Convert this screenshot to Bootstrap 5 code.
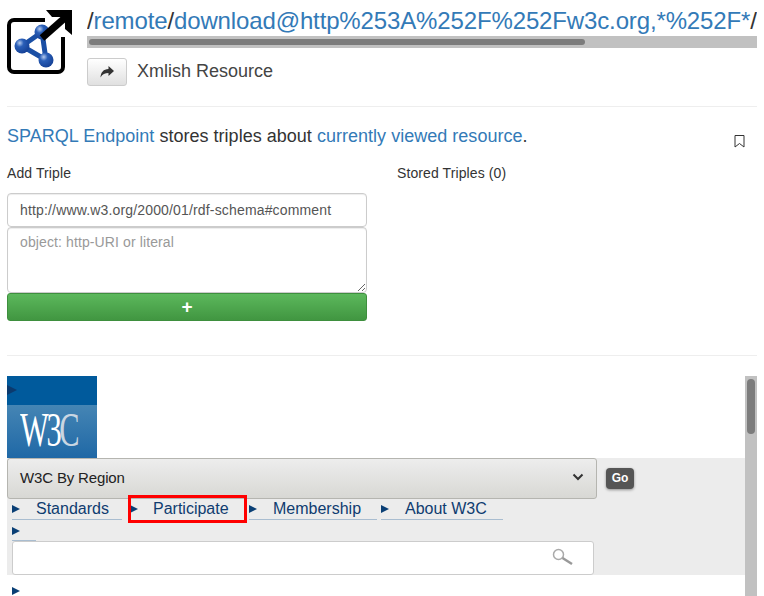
<!DOCTYPE html>
<html lang="en">
<head>
<meta charset="utf-8">
<title>Xmlish Resource</title>
<link rel="stylesheet" href="https://cdn.jsdelivr.net/npm/bootstrap@5.3.0/dist/css/bootstrap.min.css">
<style>
html,body{height:596px;overflow:hidden;background:#fff}
body{font-family:"Liberation Sans",Arial,sans-serif;font-size:14px;line-height:20px;color:#333;padding:0 7px;width:764px}
a{color:#337ab7;text-decoration:none}
.hdr{height:107px;border-bottom:1px solid #eee;gap:15px;padding-top:7px}
.logo-box{width:65px;height:70px;flex:none}
.hdr-main{min-width:0;flex:1}
.path-line{font-size:24px;line-height:27px;white-space:nowrap;overflow:hidden;height:29px;letter-spacing:-.135px}
.hscroll{height:12px;background:#c1c1c1;padding:3px 2px;margin-bottom:10px}
.hscroll-thumb{height:6px;border-radius:3px;background:#7c7c7c}
.fwd-btn{width:40px;height:28px;padding:0;border:1px solid #ccc;border-radius:3px;background:linear-gradient(#fff,#e0e0e0);line-height:1}
.res-title{font-size:18px;color:#444;margin-left:10px;margin-top:-2px}
.intro{font-size:18px;line-height:26px;padding-top:16px;height:56px;letter-spacing:.02px}
.bm{margin:7px 12px 0 0;padding-top:16px}
.lbls{height:21px;line-height:20px;color:#333;letter-spacing:.1px}
.col-add{width:360px;margin-right:30px;flex:none}
.fld{display:block;width:360px;border:1px solid #ccc;border-radius:4px;color:#555;background:#fff;padding:6px 12px;box-shadow:inset 0 1px 1px rgba(0,0,0,.075);font-size:14px;line-height:20px}
.fld-s{height:34px;margin-top:9px;margin-bottom:0;letter-spacing:.16px}
.fld-t{height:66px;margin-top:0;padding-top:4px;resize:vertical;letter-spacing:.11px}
.fld-t::placeholder{color:#999;opacity:1}
.add-btn{display:block;width:360px;height:28px;margin-top:0;padding:0;border:1px solid #3e8f3e;border-radius:3px;background:linear-gradient(#5cb85c,#419641);color:#fff;font-weight:700;font-size:19px;line-height:24px}
.rule{border-top:1px solid #eee;margin-top:34px;height:21px}
.embed{height:220px;width:750px;overflow:hidden}
.embed-main{width:738px;flex:none;height:220px}
.vscroll{width:12px;flex:none;background:#c1c1c1;padding:3px 2px}
.vscroll-thumb{width:8px;height:55px;border-radius:4px;background:#7c7c7c}
.w3c-logo{width:90px;height:82px;background:linear-gradient(#4585b4,#1f68a6);border-top:29px solid #005a9c;position:relative;padding-left:13px}
.w3c-mark{display:inline-block;color:#fff;font-family:"Liberation Serif",serif;font-size:40px;line-height:50px;letter-spacing:-3px;transform:scale(.76,1.2);transform-origin:left center}
.fade-c{color:#c9d6e2}
.tri{display:inline-block;width:0;height:0;border-left:8px solid #0a3f75;border-top:4px solid transparent;border-bottom:4px solid transparent}
.logo-tri{position:absolute;top:-20px;left:0;border-left-width:10px;border-top-width:5px;border-bottom-width:5px;border-left-color:#0b3a6e}
.panel{background:#ececec;height:117px;padding-bottom:0}
.sel-row{gap:9px}
.sel-box{width:590px;height:41px;border:1px solid #b5b5b0;border-radius:3px;background:linear-gradient(#ededed,#d8d8d4);color:#222;padding:0 12px 3px;line-height:37px;font-size:15px;letter-spacing:-.15px}
.go{background:#555;color:#fff;font-weight:700;font-size:12px;line-height:14px;border-radius:4px;padding:3px 5px 4px;margin-top:10px;height:21px;width:28px;text-align:center;box-shadow:0 1px 3px rgba(0,0,0,.4)}
.nav-row{padding:0 0 0 5px;height:22px;margin-top:-1px}
.nav-cell{position:relative;color:#0f3c70;font-size:16px;line-height:21px;height:22px;border-bottom:1px solid #a9bdd0}
.c1{width:110px;padding-left:24px;margin-right:8px}
.c2{width:115px;padding-left:23px;margin-right:4px;border-bottom-color:transparent}
.c3{width:128px;padding-left:24px;margin-right:4px}
.c4{width:122px;padding-left:24px}
.nav-cell .tri{position:absolute;left:0;top:7px}
.hl{position:absolute;left:-2px;right:-2px;top:-3px;height:28px;border:3px solid #f00;pointer-events:none}
.row2{padding-left:5px;height:21px;position:relative}
.row2 .tri{position:absolute;left:5px;top:7px}
.row2 .uline{position:absolute;left:5px;bottom:0;width:24px;border-bottom:1px solid #a9bdd0}
.srch{margin-left:5px;width:582px;height:34px;background:#fff;border:1px solid #ccc;border-radius:3px;position:relative}
.srch svg{position:absolute;right:18px;top:5px}
.row3{padding:5px 0 0 5px;height:20px}
</style>
</head>
<body>
<header class="hdr d-flex">
  <div class="logo-box">
    <svg width="65" height="70" viewBox="0 0 65 70">
      <defs><radialGradient id="nd" cx=".35" cy=".3" r=".75"><stop offset="0" stop-color="#b6cbee"/><stop offset=".35" stop-color="#2a5fb8"/><stop offset="1" stop-color="#143f94"/></radialGradient></defs>
      <path d="M38 13H7a5 5 0 0 0-5 5v42a5 5 0 0 0 5 5h44a5 5 0 0 0 5-5V30" fill="none" stroke="#000" stroke-width="4"/>
      <path d="M35 25L15 39L39 53Z" fill="none" stroke="#1a4fa5" stroke-width="5"/>
      <circle cx="35" cy="25" r="7.500" fill="url(#nd)"/><circle cx="15" cy="39" r="7.500" fill="url(#nd)"/><circle cx="39" cy="53" r="7.500" fill="url(#nd)"/>
      <path d="M35 31L60 9" stroke="#000" stroke-width="7" fill="none"/>
      <path d="M39 3H65V28L58 22V10H45Z" fill="#000"/>
    </svg>
  </div>
  <div class="hdr-main">
    <div class="path-line">/<a href="#">remote</a>/<a href="#">download@http%253A%252F%252Fw3c.org,*%252F*</a>/</div>
    <div class="hscroll"><div class="hscroll-thumb" style="width:496px"></div></div>
    <div class="d-flex align-items-center">
      <button class="fwd-btn d-flex align-items-center justify-content-center" type="button" aria-label="Forward">
        <svg width="14" height="12" viewBox="0 0 14 12"><path d="M8.500 0L14 5L8.500 10V7C5 7 2.500 8 0.500 11.500C0.800 6.500 3.500 3 8.500 3Z" fill="#333"/></svg>
      </button>
      <span class="res-title">Xmlish Resource</span>
    </div>
  </div>
</header>
<div class="d-flex justify-content-between">
  <div class="intro"><a href="#">SPARQL Endpoint</a> stores triples about <a href="#">currently viewed resource</a>.</div>
  <div class="bm"><svg width="11" height="13" viewBox="0 0 11 13"><path d="M1 .5H10V12L5.500 8.500L1 12Z" fill="none" stroke="#333"/></svg></div>
</div>
<div class="d-flex">
  <div class="col-add">
    <div class="lbls">Add Triple</div>
    <input class="fld fld-s" type="text" value="http://www.w3.org/2000/01/rdf-schema#comment">
    <textarea class="fld fld-t" placeholder="object: http-URI or literal"></textarea>
    <button class="add-btn" type="button">+</button>
  </div>
  <div class="lbls">Stored Triples (0)</div>
</div>
<div class="rule"></div>
<div class="embed d-flex">
  <div class="embed-main">
    <div class="w3c-logo"><span class="tri logo-tri"></span><span class="w3c-mark">W3<span class="fade-c">C</span></span></div>
    <div class="panel">
      <div class="sel-row d-flex">
        <div class="sel-box d-flex justify-content-between align-items-center"><span>W3C By Region</span>
          <svg width="12" height="8" viewBox="0 0 12 8"><path d="M1.500 1.500L6 6L10.500 1.500" fill="none" stroke="#333" stroke-width="2"/></svg></div>
        <div class="go">Go</div>
      </div>
      <div class="nav-row d-flex">
        <div class="nav-cell c1"><span class="tri"></span>Standards</div>
        <div class="nav-cell c2"><span class="tri"></span>Participate<span class="hl"></span></div>
        <div class="nav-cell c3"><span class="tri"></span>Membership</div>
        <div class="nav-cell c4"><span class="tri"></span>About W3C</div>
      </div>
      <div class="row2"><span class="tri"></span><span class="uline"></span></div>
      <div class="srch">
        <svg width="24" height="22" viewBox="0 0 24 22"><circle cx="7.500" cy="7.500" r="5" fill="none" stroke="#aaa" stroke-width="1.500"/><path d="M11.500 11L21 17" stroke="#999" stroke-width="2.500"/></svg>
      </div>
    </div>
    <div class="row3"><span class="tri"></span></div>
  </div>
  <div class="vscroll"><div class="vscroll-thumb"></div></div>
</div>
<script src="https://cdn.jsdelivr.net/npm/bootstrap@5.3.0/dist/js/bootstrap.bundle.min.js"></script>
</body>
</html>
